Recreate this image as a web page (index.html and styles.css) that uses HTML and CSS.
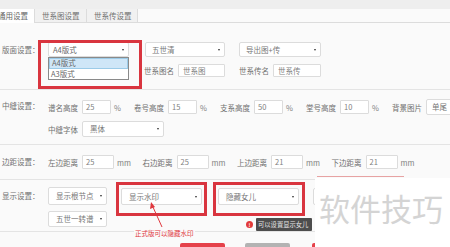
FILE: index.html
```html
<!DOCTYPE html>
<html>
<head>
<meta charset="utf-8">
<link rel="stylesheet" href="styles.css">
</head>
<body>
<div class="page">
  <div class="topbar"></div>
  <div class="tabs">
    <div class="tab active">通用设置</div>
    <div class="tab">世系图设置</div>
    <div class="tab">世系传设置</div>
  </div>

  <div class="sec sec1">
    <div class="lbl lbl-r1">版面设置：</div>
    <div class="cols">
      <div class="col c1">
        <div class="sel sel-a4">A4版式</div>
        <div class="dropdown">
          <div class="opt on">A4版式</div>
          <div class="opt">A3版式</div>
        </div>
        <div class="redbox rb1"></div>
      </div>
      <div class="col c2">
        <div class="sel">五世清</div>
        <div class="pair"><span class="plbl">世系图名</span><div class="inp inp-name">世系图</div></div>
      </div>
      <div class="col c3">
        <div class="sel">导出图+传</div>
        <div class="pair"><span class="plbl">世系传名</span><div class="inp inp-name">世系传</div></div>
      </div>
    </div>
  </div>

  <div class="sec sec2">
    <div class="lbl lbl-r2">中缝设置：</div>
    <div class="rows">
      <div class="row">
        <div class="grp"><span class="glbl">谱名高度</span><div class="inp pct">25</div><span class="unit">%</span></div>
        <div class="grp"><span class="glbl">卷号高度</span><div class="inp pct">15</div><span class="unit">%</span></div>
        <div class="grp"><span class="glbl">支系高度</span><div class="inp pct">50</div><span class="unit">%</span></div>
        <div class="grp"><span class="glbl">堂号高度</span><div class="inp pct">10</div><span class="unit">%</span></div>
        <div class="grp"><span class="glbl">背景图片</span><div class="sel sel-bg">单尾</div></div>
      </div>
      <div class="row">
        <div class="grp"><span class="glbl">中缝字体</span><div class="sel sel-font">黑体</div></div>
      </div>
    </div>
  </div>

  <div class="sec sec3">
    <div class="lbl lbl-r3">边距设置：</div>
    <div class="row">
      <div class="grp mg"><span class="glbl">左边距离</span><div class="inp mm">25</div><span class="unit">mm</span></div>
      <div class="grp mg"><span class="glbl">右边距离</span><div class="inp mm">25</div><span class="unit">mm</span></div>
      <div class="grp mg"><span class="glbl">上边距离</span><div class="inp mm">21</div><span class="unit">mm</span></div>
      <div class="grp mg"><span class="glbl">下边距离</span><div class="inp mm">21</div><span class="unit">mm</span></div>
    </div>
  </div>

  <div class="sec sec4">
    <div class="lbl lbl-r4">显示设置：</div>
    <div class="rows">
      <div class="row disp">
        <div class="sel sel-sm">显示根节点</div>
        <div class="boxed b2"><div class="sel sel-md">显示水印</div><div class="redbox rb2"></div></div>
        <div class="boxed b3"><div class="sel sel-md">隐藏女儿</div><div class="redbox rb3"></div></div>
        <div class="sel sel-md sel-hidden"></div>
      </div>
      <div class="row">
        <div class="sel sel-sm sel-low">五世一转谱</div>
      </div>
    </div>
  </div>

  <div class="btns">
    <div class="btn red"></div>
    <div class="btn gray"></div>
    <div class="btn red"></div>
  </div>

  <div class="note">正式版可以隐藏水印</div>
  <svg class="arrow" width="450" height="247" viewBox="0 0 450 247">
    <line x1="162" y1="227" x2="152.5" y2="206" stroke="#e0383e" stroke-width="1"/>
    <polygon points="151,202 150,209 155,207" fill="#e0383e"/>
  </svg>

  <div class="tip">
    <span class="tipicon">!</span>
    <span class="tipbox">可以设置显示女儿</span>
  </div>

  <div class="wm">
    <div class="wmline"></div>
    <div class="wmtext">软件技巧</div>
  </div>
</div>
</body>
</html>
```

FILE: styles.css
```css
* { box-sizing: border-box; }
html, body { margin: 0; padding: 0; }
body {
  width: 450px;
  height: 247px;
  overflow: hidden;
  background: #fafafa;
  font-family: "Noto Sans CJK SC", "Noto Sans", sans-serif;
  font-size: 7.5px;
  color: #777;
}
.page { position: relative; width: 450px; height: 247px; overflow: hidden; }

.topbar { height: 9px; background: #eeeeee; }

.tabs {
  display: flex;
  height: 14px;
  border-bottom: 1px solid #dcdcdc;
  background: #fafafa;
}
.tab {
  height: 13px;
  line-height: 13px;
  padding: 0 7px;
  border-right: 1px solid #dcdcdc;
  background: #f1f1f1;
  color: #707070;
  white-space: nowrap;
}
.tab.active {
  margin-left: -6px;
  padding: 0 4px;
  width: 41px;
  background: #fff;
  color: #666;
  height: 14px;
}
.tab:nth-child(2) { width: 52px; }
.tab:nth-child(3) { width: 51px; }

.sec {
  display: flex;
  border-bottom: 1px solid #e4e4e4;
}
.lbl {
  width: 48px;
  flex: none;
  padding-left: 2px;
  color: #707070;
  white-space: nowrap;
}

/* section 1 */
.sec1 { padding: 19px 0 11px; height: 67px; }
.lbl-r1 { line-height: 15px; }
.cols { display: flex; }
.col { position: relative; display: flex; flex-direction: column; gap: 7px; }
.c1 { width: 81px; }
.c2 { width: 80px; margin-left: 16px; }
.c3 { width: 82px; margin-left: 14px; }

.sel {
  position: relative;
  height: 15px;
  line-height: 13px;
  padding-left: 6px;
  background: #fff;
  border: 1px solid #dcdcdc;
  border-radius: 2px;
  color: #777;
  white-space: nowrap;
  overflow: hidden;
}
.sel::after {
  content: "";
  position: absolute;
  right: 4px;
  top: 50%;
  margin-top: -1px;
  border-left: 1.2px solid transparent;
  border-right: 1.2px solid transparent;
  border-top: 2.4px solid #333;
}
.sel-a4 { padding-left: 4px; color: #666; }

.dropdown {
  position: absolute;
  left: 0;
  top: 15px;
  width: 81px;
  background: #fff;
  border: 1px solid #8a8a8a;
  z-index: 3;
}
.opt {
  height: 10.5px;
  line-height: 10px;
  padding-left: 2px;
  color: #666;
}
.opt.on { background: #cfe6f7; border: 1px solid #9ccbe8; line-height: 8px; }

.redbox {
  position: absolute;
  border: 3px solid #d9353f;
  z-index: 4;
  pointer-events: none;
}
.rb1 { left: -10px; top: -2px; width: 104px; height: 49px; }

.pair { display: flex; align-items: center; height: 13px; }
.plbl { width: 34px; flex: none; color: #707070; white-space: nowrap; }
.c2 .plbl { margin-left: -1px; }
.inp {
  height: 13px;
  line-height: 11px;
  background: #fff;
  border: 1px solid #dcdcdc;
  border-radius: 1px;
  padding-left: 3px;
  color: #808080;
  white-space: nowrap;
}
.inp-name { flex: 1; padding-left: 4px; }

/* section 2 */
.sec2 { padding: 9px 0 9px; height: 55px; }
.lbl-r2 { line-height: 14px; }
.rows { display: flex; flex-direction: column; gap: 6px; }
.row { display: flex; align-items: center; }
.grp { display: flex; align-items: center; flex: none; }
.glbl { width: 34px; flex: none; white-space: nowrap; color: #707070; }
.pct { width: 29px; height: 14px; line-height: 12px; }
.unit { width: 23px; flex: none; padding-left: 3px; color: #808080; }
.sel-bg { width: 30px; height: 16px; line-height: 14px; padding-left: 5px; }
.sel-bg::after { display: none; }
.sel-font { width: 82px; height: 16px; line-height: 14px; padding-left: 7px; }

/* section 3 */
.sec3 { padding: 10px 0 10px; height: 35px; }
.lbl-r3 { line-height: 14px; }
.mg { width: 94.5px; }
.mm { width: 32px; height: 14px; line-height: 12px; }
.mg .unit { width: 28.5px; padding-left: 3px; }

/* section 4 */
.sec4 { padding: 7px 0 3px; height: 52px; }
.lbl-r4 { line-height: 18px; }
.disp { align-items: flex-start; }
.sel-sm { width: 59px; height: 18px; line-height: 16px; padding-left: 7px; }
.sel-low { height: 16px; line-height: 14px; }
.boxed { position: relative; flex: none; }
.b2 { margin-left: 14px; }
.b3 { margin-left: 16px; }
.sel-md { width: 81px; height: 17px; line-height: 15px; padding-left: 7px; margin-top: 1px; }
.sel-hidden { margin-left: 14px; width: 80px; flex: none; }
.rb2 { left: -5px; top: -5px; width: 91px; height: 34px; }
.rb3 { left: -5px; top: -5px; width: 92px; height: 34px; }

/* bottom */
.btns { display: flex; padding-left: 180px; margin-top: 11px; }
.btn { width: 45px; height: 12px; border-radius: 2px; }
.btn.red { background: #e5414a; }
.btn.gray { background: #b3b3b3; margin: 0 22px 0 20px; }

.note {
  position: absolute;
  left: 134px;
  top: 229px;
  padding: 0 1px;
  font-size: 6.5px;
  line-height: 8px;
  color: #e0383e;
  background: #fafafa;
  white-space: nowrap;
}
.arrow { position: absolute; left: 0; top: 0; pointer-events: none; }

.tip {
  position: absolute;
  left: 246px;
  top: 218px;
  display: flex;
  align-items: center;
  gap: 3px;
}
.tipicon {
  width: 7px;
  height: 7px;
  border-radius: 50%;
  background: #e23a3a;
  color: #fff;
  font-size: 5px;
  line-height: 7px;
  text-align: center;
  font-weight: bold;
}
.tipbox {
  height: 13px;
  line-height: 13px;
  padding: 0 2px;
  width: 56px;
  background: #4d4d4d;
  color: #e6e6e6;
  font-size: 6.3px;
  white-space: nowrap;
  border-radius: 1px;
}

.wm {
  position: absolute;
  left: 315px;
  top: 178px;
  width: 135px;
  height: 69px;
  background: #fff;
}
.wmline {
  position: absolute;
  left: 2px;
  top: -2px;
  width: 87px;
  height: 1px;
  background: #e7a3a3;
}
.wmtext {
  margin-top: 10px;
  padding-left: 4px;
  font-size: 31px;
  line-height: 40px;
  color: #d4d4d4;
  white-space: nowrap;
}
```
